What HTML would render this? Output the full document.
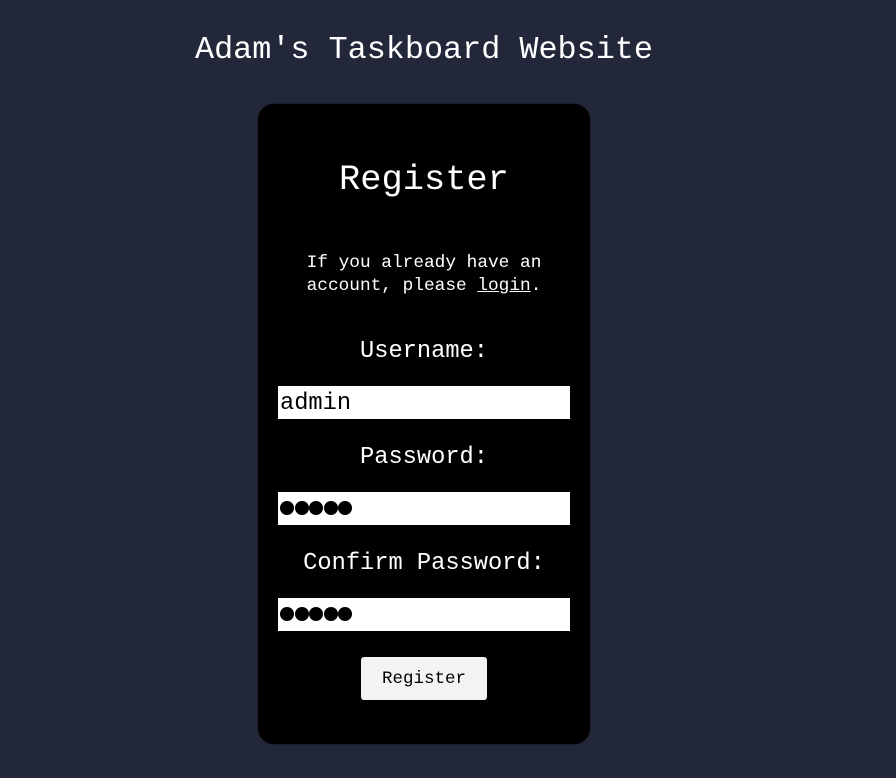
<!DOCTYPE html>
<html><head><style>
html,body{margin:0;padding:0;background:#23273a;width:896px;height:778px;overflow:hidden;font-family:"Liberation Mono","DejaVu Sans Mono",monospace;color:#fff}
.a{position:absolute;white-space:nowrap}
.c{position:absolute;left:257px;top:103px;width:332px;height:640px;background:#000;border:1px solid #1c1f2d;border-radius:17px}
.in{position:absolute;left:278px;width:292px;height:33px;background:#fff;color:#000;font-size:23.7px;line-height:35px}
.dot{display:inline-block;width:14px;height:14px;border-radius:50%;background:#000;margin-right:0.5px;vertical-align:middle;position:relative;top:-1px}
</style></head><body>
<div class="a" style="left:195px;top:30px;font-size:31.8px;line-height:40px">Adam's Taskboard Website</div>
<div class="c"></div>
<div class="a" style="left:339px;top:158px;font-size:35.4px;line-height:44px">Register</div>
<div class="a" style="left:257px;width:334px;top:252px;font-size:17.8px;line-height:23px;text-align:center">If you already have an<br>account, please <u>login</u>.</div>
<div class="a" style="left:257px;width:334px;top:338px;font-size:23.7px;line-height:28px;text-align:center">Username:</div>
<div class="in" style="top:386px"><span style="padding-left:2px">admin</span></div>
<div class="a" style="left:257px;width:334px;top:444px;font-size:23.7px;line-height:28px;text-align:center">Password:</div>
<div class="in" style="top:492px;padding-left:2px;box-sizing:border-box"><span class="dot"></span><span class="dot"></span><span class="dot"></span><span class="dot"></span><span class="dot"></span></div>
<div class="a" style="left:257px;width:334px;top:550px;font-size:23.7px;line-height:28px;text-align:center">Confirm Password:</div>
<div class="in" style="top:598px;padding-left:2px;box-sizing:border-box"><span class="dot"></span><span class="dot"></span><span class="dot"></span><span class="dot"></span><span class="dot"></span></div>
<div class="a" style="left:361px;top:657px;width:126px;height:43px;background:#f3f3f3;border-radius:3px;color:#000;font-size:17.5px;line-height:45px;text-align:center">Register</div>
</body></html>
